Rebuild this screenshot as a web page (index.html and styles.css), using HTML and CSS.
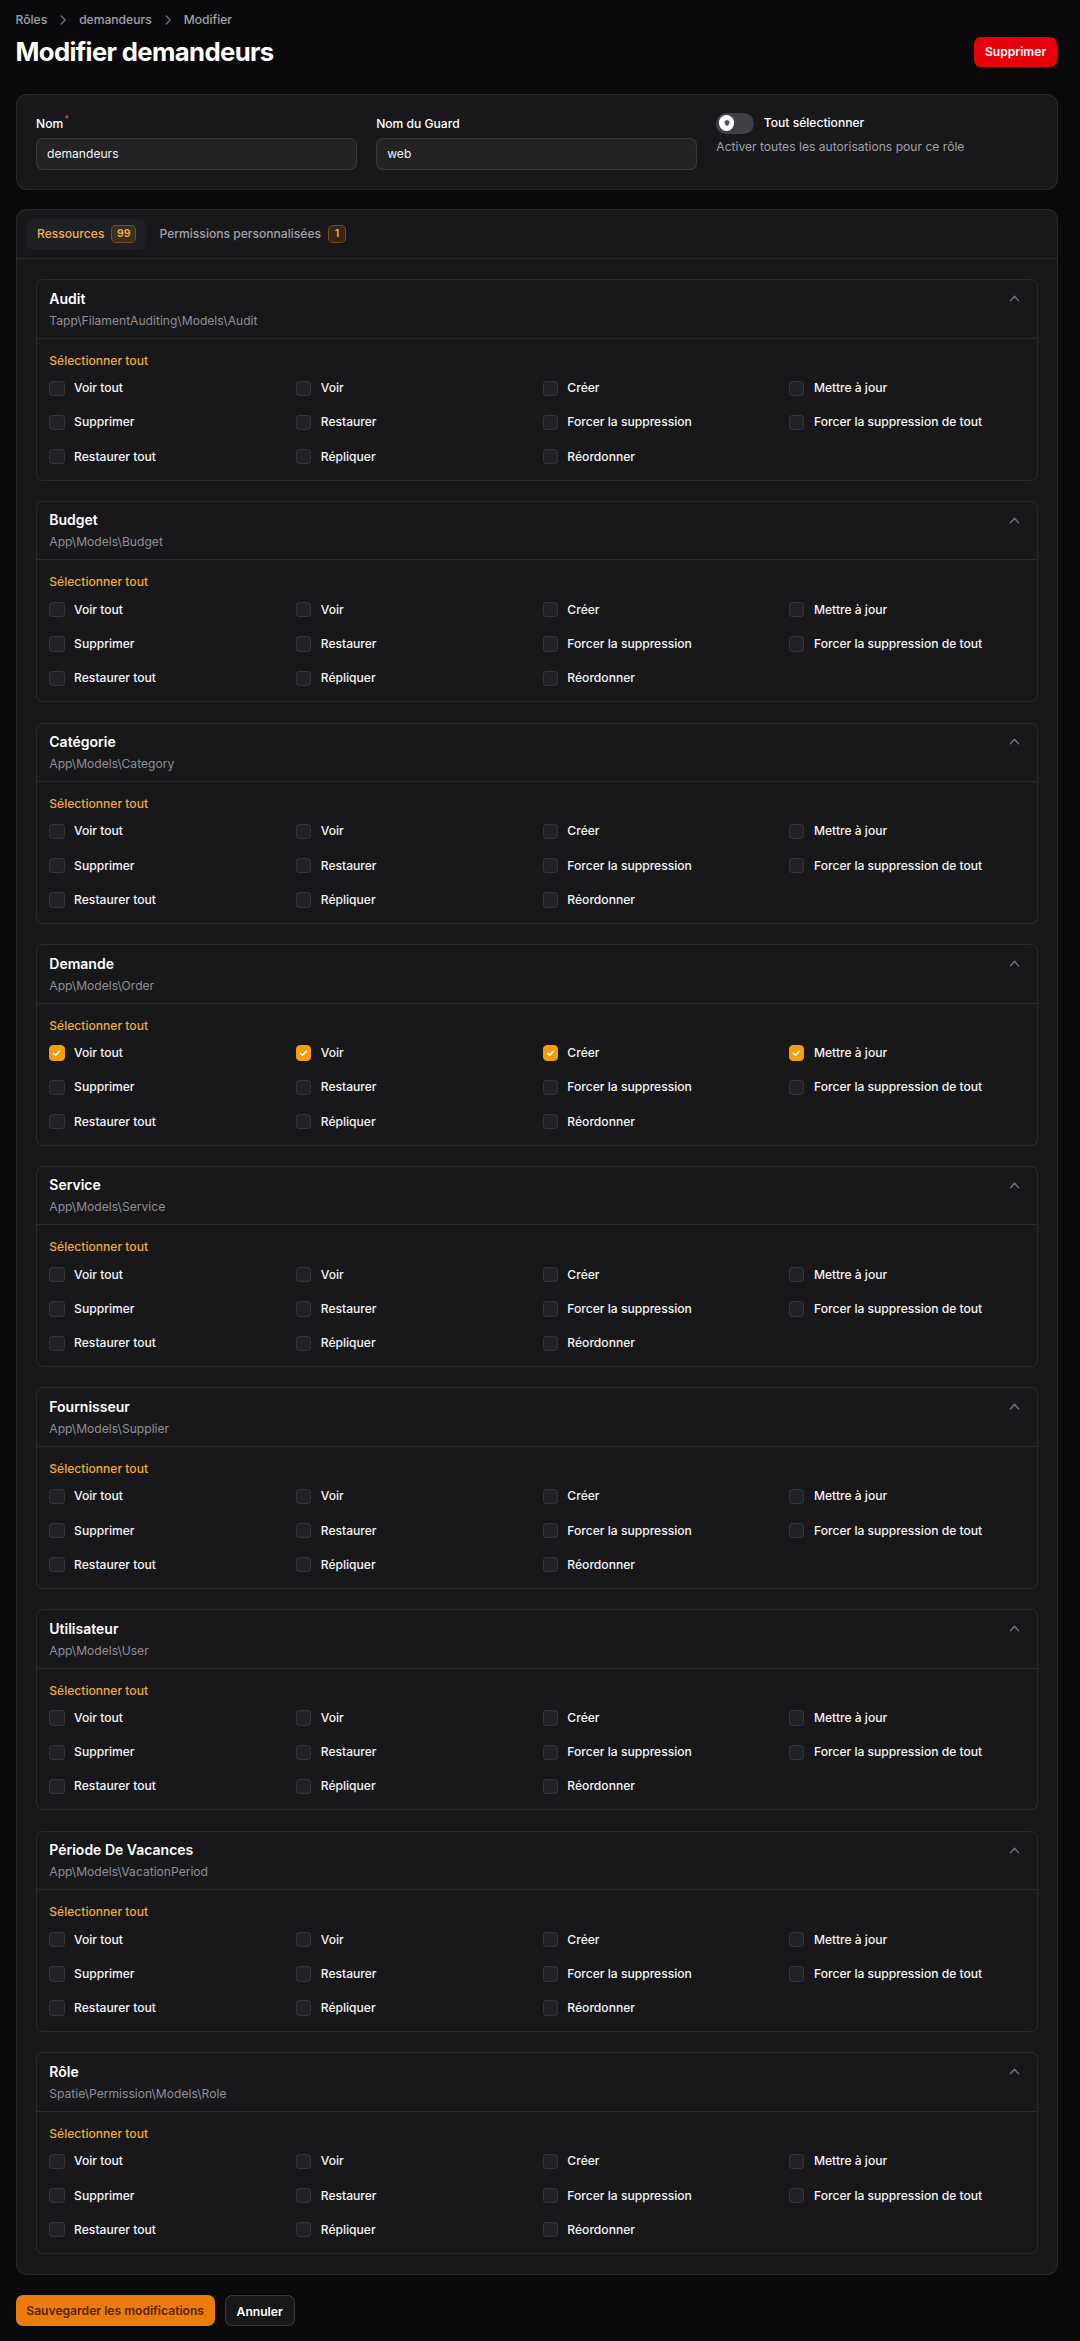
FILE: index.html
```html
<!DOCTYPE html>
<html lang="fr">
<head>
<meta charset="utf-8">
<title>Modifier demandeurs</title>
<link rel="stylesheet" href="styles.css">
</head>
<body>
<div class="page">
  <header class="page-header">
    <nav class="crumbs">
      <span>Rôles</span>
      <svg class="crumb-sep" viewBox="0 0 20 20"><path d="M8 5.5l4.5 4.5L8 14.5" fill="none" stroke="currentColor" stroke-width="1.5" stroke-linecap="round" stroke-linejoin="round"/></svg>
      <span>demandeurs</span>
      <svg class="crumb-sep" viewBox="0 0 20 20"><path d="M8 5.5l4.5 4.5L8 14.5" fill="none" stroke="currentColor" stroke-width="1.5" stroke-linecap="round" stroke-linejoin="round"/></svg>
      <span>Modifier</span>
    </nav>
    <div class="title-row">
      <h1>Modifier demandeurs</h1>
      <button class="btn btn-danger">Supprimer</button>
    </div>
  </header>

  <section class="card form-card">
    <div class="field">
      <label>Nom<sup>*</sup></label>
      <input class="input" type="text" value="demandeurs">
    </div>
    <div class="field">
      <label>Nom du Guard</label>
      <input class="input" type="text" value="web">
    </div>
    <div class="toggle-field">
      <div class="toggle-row">
        <span class="toggle"><span class="knob"><svg viewBox="0 0 20 20"><path d="M10 2.5l6 2.3v4.6c0 3.8-2.6 6.7-6 8.1-3.4-1.4-6-4.3-6-8.1V4.8z" fill="currentColor"/></svg></span></span>
        <span class="toggle-label">Tout sélectionner</span>
      </div>
      <p class="toggle-help">Activer toutes les autorisations pour ce rôle</p>
    </div>
  </section>

  <section class="card tabs-card">
    <div class="tabs-nav">
      <div class="tab active">Ressources <span class="badge">99</span></div>
      <div class="tab">Permissions personnalisées <span class="badge">1</span></div>
    </div>
    <div class="tabs-body">

      <div class="res">
        <div class="res-head">
          <div class="res-titles"><div class="res-title">Audit</div><div class="res-sub">Tapp\FilamentAuditing\Models\Audit</div></div>
          <svg class="chev" viewBox="0 0 20 20"><path d="M14.77 12.79a.75.75 0 01-1.06-.02L10 8.832 6.29 12.77a.75.75 0 11-1.08-1.04l4.25-4.5a.75.75 0 011.08 0l4.25 4.5a.75.75 0 01-.02 1.06z" fill="currentColor"/></svg>
        </div>
        <div class="res-body">
          <div class="select-all">Sélectionner tout</div>
          <div class="perms">
            <div class="perm"><span class="cb"></span>Voir tout</div>
            <div class="perm"><span class="cb"></span>Voir</div>
            <div class="perm"><span class="cb"></span>Créer</div>
            <div class="perm"><span class="cb"></span>Mettre à jour</div>
            <div class="perm"><span class="cb"></span>Supprimer</div>
            <div class="perm"><span class="cb"></span>Restaurer</div>
            <div class="perm"><span class="cb"></span>Forcer la suppression</div>
            <div class="perm"><span class="cb"></span>Forcer la suppression de tout</div>
            <div class="perm"><span class="cb"></span>Restaurer tout</div>
            <div class="perm"><span class="cb"></span>Répliquer</div>
            <div class="perm"><span class="cb"></span>Réordonner</div>
          </div>
        </div>
      </div>

      <div class="res">
        <div class="res-head">
          <div class="res-titles"><div class="res-title">Budget</div><div class="res-sub">App\Models\Budget</div></div>
          <svg class="chev" viewBox="0 0 20 20"><path d="M14.77 12.79a.75.75 0 01-1.06-.02L10 8.832 6.29 12.77a.75.75 0 11-1.08-1.04l4.25-4.5a.75.75 0 011.08 0l4.25 4.5a.75.75 0 01-.02 1.06z" fill="currentColor"/></svg>
        </div>
        <div class="res-body">
          <div class="select-all">Sélectionner tout</div>
          <div class="perms">
            <div class="perm"><span class="cb"></span>Voir tout</div>
            <div class="perm"><span class="cb"></span>Voir</div>
            <div class="perm"><span class="cb"></span>Créer</div>
            <div class="perm"><span class="cb"></span>Mettre à jour</div>
            <div class="perm"><span class="cb"></span>Supprimer</div>
            <div class="perm"><span class="cb"></span>Restaurer</div>
            <div class="perm"><span class="cb"></span>Forcer la suppression</div>
            <div class="perm"><span class="cb"></span>Forcer la suppression de tout</div>
            <div class="perm"><span class="cb"></span>Restaurer tout</div>
            <div class="perm"><span class="cb"></span>Répliquer</div>
            <div class="perm"><span class="cb"></span>Réordonner</div>
          </div>
        </div>
      </div>

      <div class="res">
        <div class="res-head">
          <div class="res-titles"><div class="res-title">Catégorie</div><div class="res-sub">App\Models\Category</div></div>
          <svg class="chev" viewBox="0 0 20 20"><path d="M14.77 12.79a.75.75 0 01-1.06-.02L10 8.832 6.29 12.77a.75.75 0 11-1.08-1.04l4.25-4.5a.75.75 0 011.08 0l4.25 4.5a.75.75 0 01-.02 1.06z" fill="currentColor"/></svg>
        </div>
        <div class="res-body">
          <div class="select-all">Sélectionner tout</div>
          <div class="perms">
            <div class="perm"><span class="cb"></span>Voir tout</div>
            <div class="perm"><span class="cb"></span>Voir</div>
            <div class="perm"><span class="cb"></span>Créer</div>
            <div class="perm"><span class="cb"></span>Mettre à jour</div>
            <div class="perm"><span class="cb"></span>Supprimer</div>
            <div class="perm"><span class="cb"></span>Restaurer</div>
            <div class="perm"><span class="cb"></span>Forcer la suppression</div>
            <div class="perm"><span class="cb"></span>Forcer la suppression de tout</div>
            <div class="perm"><span class="cb"></span>Restaurer tout</div>
            <div class="perm"><span class="cb"></span>Répliquer</div>
            <div class="perm"><span class="cb"></span>Réordonner</div>
          </div>
        </div>
      </div>

      <div class="res">
        <div class="res-head">
          <div class="res-titles"><div class="res-title">Demande</div><div class="res-sub">App\Models\Order</div></div>
          <svg class="chev" viewBox="0 0 20 20"><path d="M14.77 12.79a.75.75 0 01-1.06-.02L10 8.832 6.29 12.77a.75.75 0 11-1.08-1.04l4.25-4.5a.75.75 0 011.08 0l4.25 4.5a.75.75 0 01-.02 1.06z" fill="currentColor"/></svg>
        </div>
        <div class="res-body">
          <div class="select-all">Sélectionner tout</div>
          <div class="perms">
            <div class="perm"><span class="cb checked"><svg viewBox="0 0 16 16"><path d="M4.2 8.3l2.5 2.4 5-5.2" fill="none" stroke="#fff" stroke-width="1.8" stroke-linecap="round" stroke-linejoin="round"/></svg></span>Voir tout</div>
            <div class="perm"><span class="cb checked"><svg viewBox="0 0 16 16"><path d="M4.2 8.3l2.5 2.4 5-5.2" fill="none" stroke="#fff" stroke-width="1.8" stroke-linecap="round" stroke-linejoin="round"/></svg></span>Voir</div>
            <div class="perm"><span class="cb checked"><svg viewBox="0 0 16 16"><path d="M4.2 8.3l2.5 2.4 5-5.2" fill="none" stroke="#fff" stroke-width="1.8" stroke-linecap="round" stroke-linejoin="round"/></svg></span>Créer</div>
            <div class="perm"><span class="cb checked"><svg viewBox="0 0 16 16"><path d="M4.2 8.3l2.5 2.4 5-5.2" fill="none" stroke="#fff" stroke-width="1.8" stroke-linecap="round" stroke-linejoin="round"/></svg></span>Mettre à jour</div>
            <div class="perm"><span class="cb"></span>Supprimer</div>
            <div class="perm"><span class="cb"></span>Restaurer</div>
            <div class="perm"><span class="cb"></span>Forcer la suppression</div>
            <div class="perm"><span class="cb"></span>Forcer la suppression de tout</div>
            <div class="perm"><span class="cb"></span>Restaurer tout</div>
            <div class="perm"><span class="cb"></span>Répliquer</div>
            <div class="perm"><span class="cb"></span>Réordonner</div>
          </div>
        </div>
      </div>

      <div class="res">
        <div class="res-head">
          <div class="res-titles"><div class="res-title">Service</div><div class="res-sub">App\Models\Service</div></div>
          <svg class="chev" viewBox="0 0 20 20"><path d="M14.77 12.79a.75.75 0 01-1.06-.02L10 8.832 6.29 12.77a.75.75 0 11-1.08-1.04l4.25-4.5a.75.75 0 011.08 0l4.25 4.5a.75.75 0 01-.02 1.06z" fill="currentColor"/></svg>
        </div>
        <div class="res-body">
          <div class="select-all">Sélectionner tout</div>
          <div class="perms">
            <div class="perm"><span class="cb"></span>Voir tout</div>
            <div class="perm"><span class="cb"></span>Voir</div>
            <div class="perm"><span class="cb"></span>Créer</div>
            <div class="perm"><span class="cb"></span>Mettre à jour</div>
            <div class="perm"><span class="cb"></span>Supprimer</div>
            <div class="perm"><span class="cb"></span>Restaurer</div>
            <div class="perm"><span class="cb"></span>Forcer la suppression</div>
            <div class="perm"><span class="cb"></span>Forcer la suppression de tout</div>
            <div class="perm"><span class="cb"></span>Restaurer tout</div>
            <div class="perm"><span class="cb"></span>Répliquer</div>
            <div class="perm"><span class="cb"></span>Réordonner</div>
          </div>
        </div>
      </div>

      <div class="res">
        <div class="res-head">
          <div class="res-titles"><div class="res-title">Fournisseur</div><div class="res-sub">App\Models\Supplier</div></div>
          <svg class="chev" viewBox="0 0 20 20"><path d="M14.77 12.79a.75.75 0 01-1.06-.02L10 8.832 6.29 12.77a.75.75 0 11-1.08-1.04l4.25-4.5a.75.75 0 011.08 0l4.25 4.5a.75.75 0 01-.02 1.06z" fill="currentColor"/></svg>
        </div>
        <div class="res-body">
          <div class="select-all">Sélectionner tout</div>
          <div class="perms">
            <div class="perm"><span class="cb"></span>Voir tout</div>
            <div class="perm"><span class="cb"></span>Voir</div>
            <div class="perm"><span class="cb"></span>Créer</div>
            <div class="perm"><span class="cb"></span>Mettre à jour</div>
            <div class="perm"><span class="cb"></span>Supprimer</div>
            <div class="perm"><span class="cb"></span>Restaurer</div>
            <div class="perm"><span class="cb"></span>Forcer la suppression</div>
            <div class="perm"><span class="cb"></span>Forcer la suppression de tout</div>
            <div class="perm"><span class="cb"></span>Restaurer tout</div>
            <div class="perm"><span class="cb"></span>Répliquer</div>
            <div class="perm"><span class="cb"></span>Réordonner</div>
          </div>
        </div>
      </div>

      <div class="res">
        <div class="res-head">
          <div class="res-titles"><div class="res-title">Utilisateur</div><div class="res-sub">App\Models\User</div></div>
          <svg class="chev" viewBox="0 0 20 20"><path d="M14.77 12.79a.75.75 0 01-1.06-.02L10 8.832 6.29 12.77a.75.75 0 11-1.08-1.04l4.25-4.5a.75.75 0 011.08 0l4.25 4.5a.75.75 0 01-.02 1.06z" fill="currentColor"/></svg>
        </div>
        <div class="res-body">
          <div class="select-all">Sélectionner tout</div>
          <div class="perms">
            <div class="perm"><span class="cb"></span>Voir tout</div>
            <div class="perm"><span class="cb"></span>Voir</div>
            <div class="perm"><span class="cb"></span>Créer</div>
            <div class="perm"><span class="cb"></span>Mettre à jour</div>
            <div class="perm"><span class="cb"></span>Supprimer</div>
            <div class="perm"><span class="cb"></span>Restaurer</div>
            <div class="perm"><span class="cb"></span>Forcer la suppression</div>
            <div class="perm"><span class="cb"></span>Forcer la suppression de tout</div>
            <div class="perm"><span class="cb"></span>Restaurer tout</div>
            <div class="perm"><span class="cb"></span>Répliquer</div>
            <div class="perm"><span class="cb"></span>Réordonner</div>
          </div>
        </div>
      </div>

      <div class="res">
        <div class="res-head">
          <div class="res-titles"><div class="res-title">Période De Vacances</div><div class="res-sub">App\Models\VacationPeriod</div></div>
          <svg class="chev" viewBox="0 0 20 20"><path d="M14.77 12.79a.75.75 0 01-1.06-.02L10 8.832 6.29 12.77a.75.75 0 11-1.08-1.04l4.25-4.5a.75.75 0 011.08 0l4.25 4.5a.75.75 0 01-.02 1.06z" fill="currentColor"/></svg>
        </div>
        <div class="res-body">
          <div class="select-all">Sélectionner tout</div>
          <div class="perms">
            <div class="perm"><span class="cb"></span>Voir tout</div>
            <div class="perm"><span class="cb"></span>Voir</div>
            <div class="perm"><span class="cb"></span>Créer</div>
            <div class="perm"><span class="cb"></span>Mettre à jour</div>
            <div class="perm"><span class="cb"></span>Supprimer</div>
            <div class="perm"><span class="cb"></span>Restaurer</div>
            <div class="perm"><span class="cb"></span>Forcer la suppression</div>
            <div class="perm"><span class="cb"></span>Forcer la suppression de tout</div>
            <div class="perm"><span class="cb"></span>Restaurer tout</div>
            <div class="perm"><span class="cb"></span>Répliquer</div>
            <div class="perm"><span class="cb"></span>Réordonner</div>
          </div>
        </div>
      </div>

      <div class="res">
        <div class="res-head">
          <div class="res-titles"><div class="res-title">Rôle</div><div class="res-sub">Spatie\Permission\Models\Role</div></div>
          <svg class="chev" viewBox="0 0 20 20"><path d="M14.77 12.79a.75.75 0 01-1.06-.02L10 8.832 6.29 12.77a.75.75 0 11-1.08-1.04l4.25-4.5a.75.75 0 011.08 0l4.25 4.5a.75.75 0 01-.02 1.06z" fill="currentColor"/></svg>
        </div>
        <div class="res-body">
          <div class="select-all">Sélectionner tout</div>
          <div class="perms">
            <div class="perm"><span class="cb"></span>Voir tout</div>
            <div class="perm"><span class="cb"></span>Voir</div>
            <div class="perm"><span class="cb"></span>Créer</div>
            <div class="perm"><span class="cb"></span>Mettre à jour</div>
            <div class="perm"><span class="cb"></span>Supprimer</div>
            <div class="perm"><span class="cb"></span>Restaurer</div>
            <div class="perm"><span class="cb"></span>Forcer la suppression</div>
            <div class="perm"><span class="cb"></span>Forcer la suppression de tout</div>
            <div class="perm"><span class="cb"></span>Restaurer tout</div>
            <div class="perm"><span class="cb"></span>Répliquer</div>
            <div class="perm"><span class="cb"></span>Réordonner</div>
          </div>
        </div>
      </div>

    </div>
  </section>

  <div class="actions">
    <button class="btn btn-primary">Sauvegarder les modifications</button>
    <button class="btn btn-gray">Annuler</button>
  </div>
</div>
</body>
</html>
```

FILE: styles.css
```css
* { box-sizing: border-box; }

html, body {
  margin: 0;
  background: #0a0a0c;
}

body {
  font-family: Inter, "Noto Sans", sans-serif;
  color: #ffffff;
  font-size: 12.1px;
  line-height: 18px;
}

.page {
  padding: 11px 22px 12px 15.5px;
}

/* header */
.crumbs {
  display: flex;
  align-items: center;
  gap: 7px;
  height: 18px;
  color: #a1a1aa;
  font-weight: 500;
}

.crumb-sep {
  width: 18px;
  height: 18px;
  color: #71717a;
}

.title-row {
  margin-top: 7px;
  display: flex;
  align-items: center;
  justify-content: space-between;
}

h1 {
  margin: 0;
  font-size: 25.7px;
  line-height: 32px;
  font-weight: 700;
  letter-spacing: -0.025em;
  color: #ffffff;
}

.btn {
  font-family: inherit;
  font-size: 12.1px;
  font-weight: 600;
  line-height: 18px;
  border: 0;
  border-radius: 7px;
  padding: 6.2px 10.8px;
  height: 30.5px;
}

.btn-danger {
  background: #e7000b;
  color: #fff;
  margin-right: 1px;
}

.btn-primary {
  background: #ea7b0c;
  color: #5a2307;
}

.btn-gray {
  background: #18181b;
  color: #ffffff;
  border: 1px solid rgba(255, 255, 255, 0.14);
}

/* cards */
.card {
  background: #18181b;
  border: 1px solid rgba(255, 255, 255, 0.07);
  border-radius: 11px;
}

.form-card {
  margin-top: 25.5px;
  padding: 20px 19.5px 19px;
  display: grid;
  grid-template-columns: repeat(3, 1fr);
  column-gap: 19px;
}

.field label {
  display: block;
  font-weight: 500;
  line-height: 18px;
}

.field sup {
  color: #ef4444;
  font-size: 9px;
  line-height: 0;
  margin-left: 1px;
}

.input {
  display: block;
  width: 100%;
  margin-top: 5px;
  height: 32.7px;
  padding: 0 10px;
  background: #232326;
  border: 1px solid rgba(255, 255, 255, 0.1);
  border-radius: 7px;
  color: #f4f4f5;
  font-family: inherit;
  font-size: 12.1px;
  outline: none;
}

.toggle-field {
  margin-top: -1.6px;
}

.toggle-row {
  display: flex;
  align-items: center;
  gap: 10px;
}

.toggle {
  width: 37.5px;
  height: 20.6px;
  border-radius: 11px;
  background: #3f3f46;
  display: flex;
  align-items: center;
  padding-left: 2.5px;
}

.knob {
  width: 15.5px;
  height: 15.5px;
  border-radius: 50%;
  background: #ffffff;
  display: flex;
  align-items: center;
  justify-content: center;
  color: #52525b;
}

.knob svg {
  width: 8px;
  height: 8px;
}

.toggle-label {
  font-weight: 500;
}

.toggle-help {
  margin: 4px 0 0;
  color: #a1a1aa;
}

/* tabs card */
.tabs-card {
  margin-top: 19px;
}

.tabs-nav {
  display: flex;
  gap: 3px;
  padding: 8.5px 10.2px;
  border-bottom: 1px solid rgba(255, 255, 255, 0.08);
}

.tab {
  display: flex;
  align-items: center;
  gap: 7px;
  height: 31px;
  padding: 0 10.3px;
  border-radius: 7px;
  color: #a1a1aa;
  font-weight: 500;
}

.tab.active {
  background: #202024;
  color: #f2b13a;
}

.badge {
  display: inline-flex;
  align-items: center;
  justify-content: center;
  min-width: 18px;
  height: 17.5px;
  padding: 0 4.5px;
  border-radius: 5px;
  font-size: 10.5px;
  font-weight: 600;
  color: #f2b13a;
  background: rgba(245, 158, 11, 0.12);
  border: 1px solid rgba(245, 158, 11, 0.32);
}

.tabs-body {
  padding: 20px 19.5px 20px 19.3px;
  display: flex;
  flex-direction: column;
  gap: 20.3px;
}

/* resource section */
.res {
  border: 1px solid rgba(255, 255, 255, 0.08);
  border-radius: 7px;
  background: #18181b;
}

.res-head {
  display: flex;
  align-items: flex-start;
  justify-content: space-between;
  padding: 7.5px 12.5px 8px;
  border-bottom: 1px solid rgba(255, 255, 255, 0.08);
}

.res-title {
  font-size: 14px;
  line-height: 21.6px;
  font-weight: 600;
  color: #ffffff;
}

.res-sub {
  margin-top: 2.5px;
  color: #8f8f97;
}

.chev {
  width: 19px;
  height: 19px;
  margin-top: 1.3px;
  color: #71717a;
}

.res-body {
  padding: 12.9px 12.5px 14px;
}

.select-all {
  color: #eeab36;
  font-weight: 500;
}

.perms {
  margin-top: 9.5px;
  display: grid;
  grid-template-columns: repeat(4, 1fr);
  column-gap: 11.8px;
  row-gap: 16.2px;
}

.perm {
  display: flex;
  align-items: center;
  gap: 9.5px;
  height: 18px;
  font-weight: 500;
  color: #f4f4f5;
}

.cb {
  flex: none;
  width: 15.3px;
  height: 15.3px;
  border-radius: 4px;
  background: #222226;
  border: 1px solid rgba(255, 255, 255, 0.09);
  display: flex;
  align-items: center;
  justify-content: center;
}

.cb.checked {
  background: #f59e0b;
  border-color: #f59e0b;
}

.cb svg {
  width: 14px;
  height: 14px;
}

/* footer actions */
.actions {
  margin-top: 20.6px;
  display: flex;
  gap: 10px;
}
```
